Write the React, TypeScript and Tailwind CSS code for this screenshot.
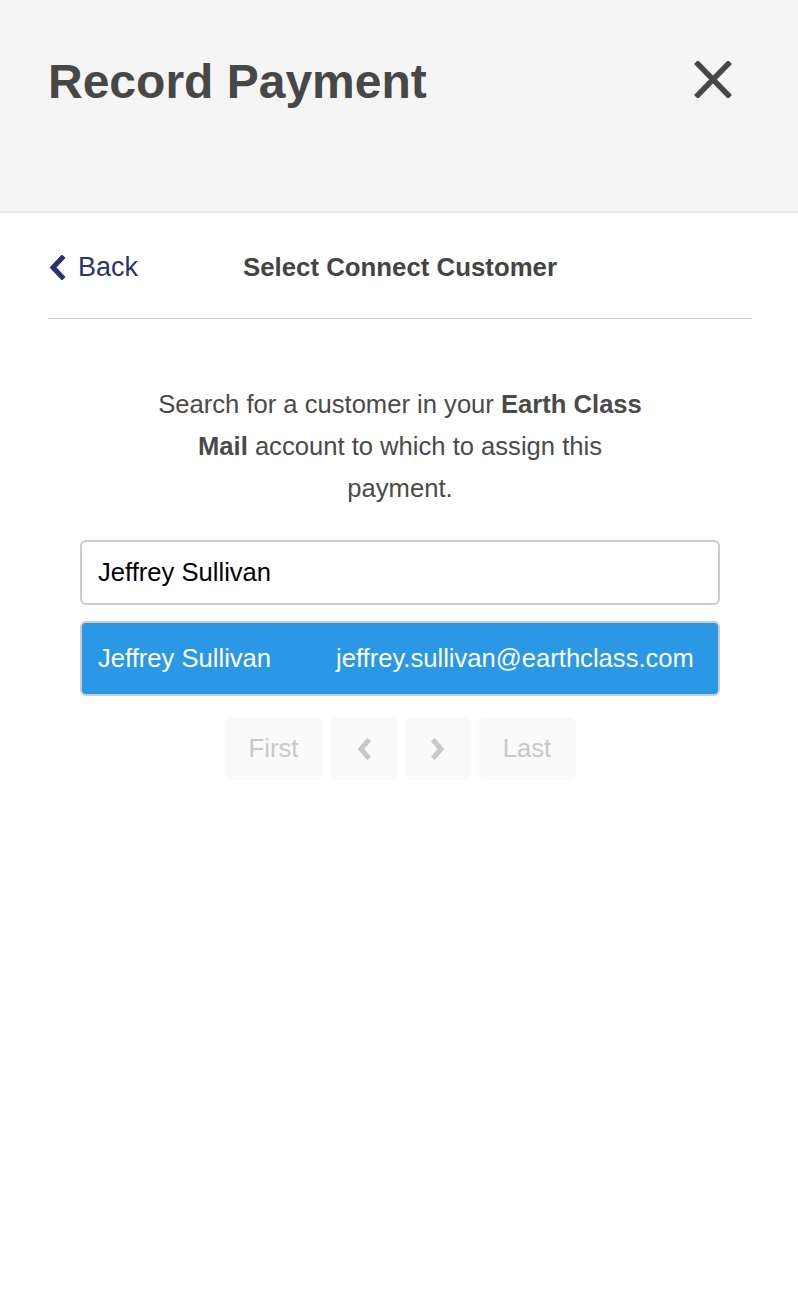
import React from "react";

export default function App() {
  const font = { fontFamily: '"Liberation Sans", Arial, sans-serif' };
  return (
    <div className="min-h-[1298px] w-full overflow-hidden bg-white" style={font}>
      <div className="w-[800px]">
        <div className="h-[213px] bg-[#f5f5f5] border-b-2 border-[#e8e8e8] flex justify-between px-[48px] pt-[54px]">
          <h1 className="text-[48px] leading-[55px] font-bold text-[#474747] m-0">Record Payment</h1>
          <button className="mt-[7px] mr-[20px] h-[37px] w-[38px]">
            <svg width="38" height="37" viewBox="0 0 38 37">
              <path d="M2 1 L36 36 M36 1 L2 36" stroke="#474747" strokeWidth="5.5" fill="none" />
            </svg>
          </button>
        </div>
        <div className="px-[48px]">
          <div className="h-[106px] pt-[4px] grid grid-cols-[1fr_auto_1fr] items-center border-b border-[#cccccc]">
            <button className="flex items-center gap-[12px] text-[27px] text-[#2b3270] justify-self-start">
              <svg width="18" height="25" viewBox="0 0 18 25">
                <path d="M14 3 L5 12.5 L14 22" stroke="#2b3270" strokeWidth="5" fill="none" strokeLinecap="square" />
              </svg>
              <span>Back</span>
            </button>
            <div className="text-[25.8px] font-bold text-[#444444]">Select Connect Customer</div>
            <div />
          </div>
          <p className="mx-auto mt-[64px] w-[500px] text-center text-[25.6px] leading-[42px] text-[#4a4a4a]">
            Search for a customer in your <b>Earth Class Mail</b> account to which to assign this payment.
          </p>
          <div className="mx-[32px] mt-[31px]">
            <input
              defaultValue="Jeffrey Sullivan"
              className="w-full h-[65px] border-2 border-[#cccccc] rounded-[6px] px-[16px] text-[25.6px] text-black outline-none"
              style={font}
            />
            <div className="mt-[16px] h-[75px] flex items-center border-2 border-[#cccccc] rounded-[6px] bg-[#2a98e5] px-[16px] text-[25.6px] text-white">
              <span className="w-[238px]">Jeffrey Sullivan</span>
              <span>jeffrey.sullivan@earthclass.com</span>
            </div>
            <div className="mt-[21px] flex justify-center gap-[8px]">
              <button className="h-[63px] w-[98px] rounded-[6px] bg-[#fafafa] text-[25.6px] text-[#c8c8c8]">First</button>
              <button className="h-[63px] w-[66px] rounded-[6px] bg-[#fafafa] flex items-center justify-center">
                <svg width="16" height="22" viewBox="0 0 16 22">
                  <path d="M11.5 3.5 L5 11 L11.5 18.5" stroke="#c8c8c8" strokeWidth="5" fill="none" strokeLinecap="square" />
                </svg>
              </button>
              <button className="h-[63px] w-[66px] rounded-[6px] bg-[#fafafa] flex items-center justify-center">
                <svg width="16" height="22" viewBox="0 0 16 22">
                  <path d="M4.5 3.5 L11 11 L4.5 18.5" stroke="#c8c8c8" strokeWidth="5" fill="none" strokeLinecap="square" />
                </svg>
              </button>
              <button className="h-[63px] w-[97px] rounded-[6px] bg-[#fafafa] text-[25.6px] text-[#c8c8c8]">Last</button>
            </div>
          </div>
        </div>
      </div>
    </div>
  );
}
